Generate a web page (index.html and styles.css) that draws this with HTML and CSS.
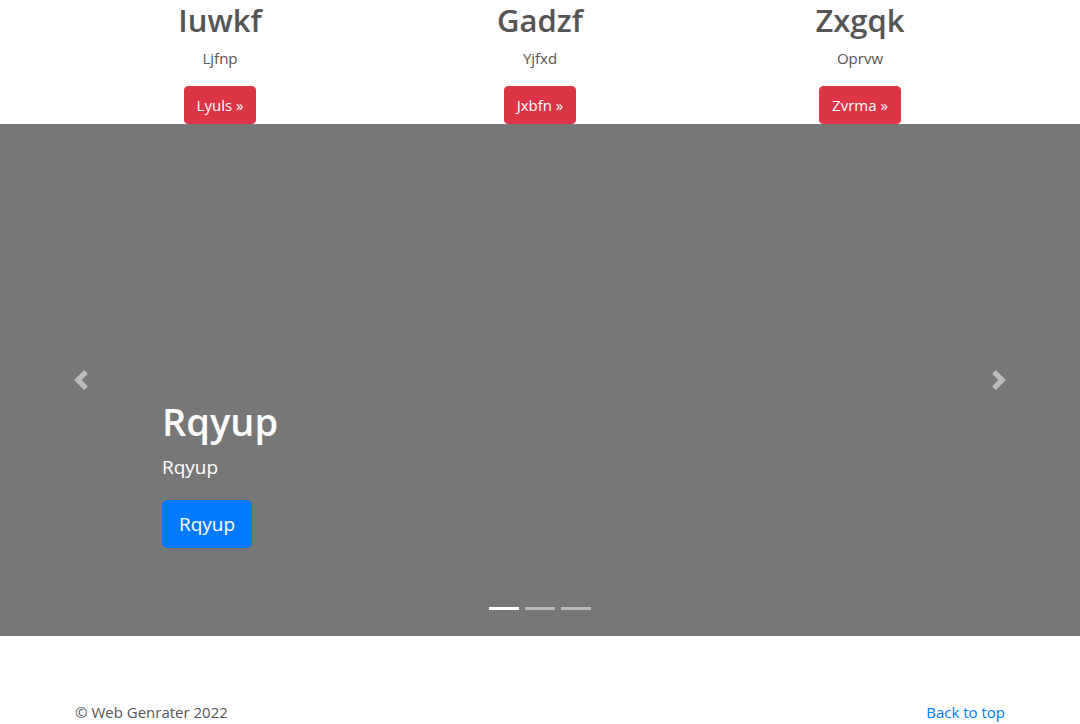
FILE: index.html
```html
<!DOCTYPE html>
<html lang="en">
<head>
<meta charset="utf-8">
<title>Carousel</title>
<link rel="stylesheet" href="styles.css">
</head>
<body>
<section class="marketing">
  <div class="row">
    <div class="col">
      <h2 class="col-title">Iuwkf</h2>
      <p class="col-text">Ljfnp</p>
      <p class="col-action"><a class="btn btn-danger" href="#">Lyuls &raquo;</a></p>
    </div>
    <div class="col">
      <h2 class="col-title">Gadzf</h2>
      <p class="col-text">Yjfxd</p>
      <p class="col-action"><a class="btn btn-danger" href="#">Jxbfn &raquo;</a></p>
    </div>
    <div class="col">
      <h2 class="col-title">Zxgqk</h2>
      <p class="col-text">Oprvw</p>
      <p class="col-action"><a class="btn btn-danger" href="#">Zvrma &raquo;</a></p>
    </div>
  </div>
</section>

<section class="carousel">
  <div class="slide">
    <div class="caption">
      <h1 class="caption-title">Rqyup</h1>
      <p class="caption-text">Rqyup</p>
      <p class="caption-action"><a class="btn btn-lg btn-primary" href="#">Rqyup</a></p>
    </div>
  </div>
  <a class="control control-prev" href="#" aria-label="Previous">
    <svg class="control-icon" viewBox="0 0 8 8" width="20" height="20"><path fill="#fff" d="M5.25 0l-4 4 4 4 1.5-1.5L4.25 4l2.5-2.5L5.25 0z"/></svg>
  </a>
  <a class="control control-next" href="#" aria-label="Next">
    <svg class="control-icon" viewBox="0 0 8 8" width="20" height="20"><path fill="#fff" d="M2.75 0l-1.5 1.5L3.75 4l-2.5 2.5L2.75 8l4-4-4-4z"/></svg>
  </a>
  <ol class="indicators">
    <li class="indicator active"></li>
    <li class="indicator"></li>
    <li class="indicator"></li>
  </ol>
</section>

<footer class="footer">
  <p class="footer-copy">&copy; Web Genrater 2022</p>
  <p class="footer-top"><a href="#">Back to top</a></p>
</footer>
</body>
</html>
```

FILE: styles.css
```css
* { box-sizing: border-box; }

html, body {
  margin: 0;
  padding: 0;
}

body {
  font-family: "Open Sans", "Noto Sans", sans-serif;
  font-size: 16px;
  line-height: 1.5;
  color: #555;
  background: #fff;
}

a { text-decoration: none; }

.marketing {
  width: 960px;
  margin: 0 auto;
}

.row {
  display: grid;
  grid-template-columns: repeat(3, 1fr);
}

.col {
  padding: 0 15px;
  text-align: center;
}

.col-title {
  margin: 0 0 7px;
  padding-top: 1px;
  font-size: 31px;
  font-weight: 600;
  line-height: 38px;
  color: #555;
}

.col-text {
  margin: 0 0 16px;
  font-size: 15px;
  line-height: 24px;
}

.col-action {
  margin: 0;
}

.btn {
  display: inline-block;
  padding: 6px 12px;
  font-size: 15px;
  line-height: 24px;
  border: 1px solid transparent;
  border-radius: 4px;
  color: #fff;
}

.btn-danger {
  background: #dc3545;
  border-color: #dc3545;
}

.btn-primary {
  background: #007bff;
  border-color: #007bff;
}

.btn-lg {
  padding: 8px 16px;
  font-size: 19px;
  line-height: 30px;
  border-radius: 5px;
}

.carousel {
  position: relative;
  height: 512px;
  background: #777;
}

.slide {
  height: 100%;
  display: flex;
  align-items: flex-end;
  padding: 0 15% 88px;
}

.caption {
  color: #fff;
}

.caption-title {
  margin: 0 0 7px;
  font-size: 38px;
  font-weight: 600;
  line-height: 48px;
}

.caption-text {
  margin: 0 0 18px;
  font-size: 19px;
  line-height: 30px;
}

.caption-action {
  margin: 0;
}

.control {
  position: absolute;
  top: 0;
  bottom: 0;
  width: 15%;
  display: flex;
  align-items: center;
  justify-content: center;
  opacity: 0.5;
}

.control-prev { left: 0; }
.control-next { right: 0; }

.control-icon {
  display: block;
  width: 20px;
  height: 20px;
}

.indicators {
  position: absolute;
  left: 0;
  right: 0;
  bottom: 16px;
  margin: 0;
  padding: 0;
  list-style: none;
  display: flex;
  justify-content: center;
}

.indicator {
  width: 30px;
  height: 23px;
  margin: 0 3px;
  border-top: 10px solid transparent;
  border-bottom: 10px solid transparent;
  background: #fff;
  background-clip: padding-box;
  opacity: 0.5;
}

.indicator.active { opacity: 1; }

.footer {
  width: 960px;
  margin: 0 auto;
  padding: 64px 15px 0;
  display: flex;
  justify-content: space-between;
}

.footer-copy,
.footer-top {
  margin: 0;
  font-size: 15px;
  line-height: 24px;
}

.footer-top a { color: #007bff; }
```
